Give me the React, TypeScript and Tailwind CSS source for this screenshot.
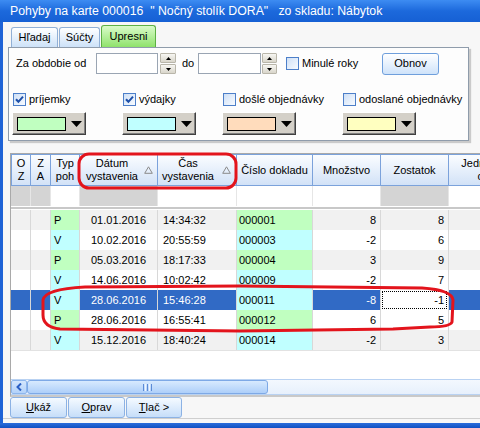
import React from "react";

type Row = { t: "P" | "V"; d: string; c: string; n: string; m: string; z: string; sel?: boolean };

const rows: Row[] = [
  { t: "P", d: "01.01.2016", c: "14:34:32", n: "000001", m: "8", z: "8" },
  { t: "V", d: "10.02.2016", c: "20:55:59", n: "000003", m: "-2", z: "6" },
  { t: "P", d: "05.03.2016", c: "18:17:33", n: "000004", m: "3", z: "9" },
  { t: "V", d: "14.06.2016", c: "10:02:42", n: "000009", m: "-2", z: "7" },
  { t: "V", d: "28.06.2016", c: "15:46:28", n: "000011", m: "-8", z: "-1", sel: true },
  { t: "P", d: "28.06.2016", c: "16:55:41", n: "000012", m: "6", z: "5" },
  { t: "V", d: "15.12.2016", c: "18:40:24", n: "000014", m: "-2", z: "3" },
];

function Check({ on }: { on?: boolean }) {
  return (
    <span className="w-[13px] h-[13px] shrink-0 border border-[#4d7fc9] bg-gradient-to-br from-[#cfe0f6] to-[#f8fbff] flex items-center justify-center">
      {on && (
        <svg width="9" height="9" viewBox="0 0 9 9">
          <path d="M1 4.2 L3.4 6.8 L8 1.6" stroke="#1d4fa8" strokeWidth="2" fill="none" />
        </svg>
      )}
    </span>
  );
}

function Spin({ w }: { w: string }) {
  const btn =
    "flex-1 bg-gradient-to-b from-[#f7f6f2] to-[#d9d6cb] border border-[#b9b6aa] rounded-[1px] flex items-center justify-center";
  return (
    <div className={`${w} h-[21px] flex flex-col gap-[1px]`}>
      <div className={btn}>
        <svg width="5" height="3" viewBox="0 0 5 3">
          <path d="M0 3 L2.5 0 L5 3 Z" fill="#000" />
        </svg>
      </div>
      <div className={btn}>
        <svg width="5" height="3" viewBox="0 0 5 3">
          <path d="M0 0 L2.5 3 L5 0 Z" fill="#000" />
        </svg>
      </div>
    </div>
  );
}

function Combo({ color }: { color: string }) {
  return (
    <div className="w-[74px] h-[23px] bg-[#d4d0c8] border border-t-white border-l-white border-r-[#404040] border-b-[#404040] shadow-[inset_-1px_-1px_0_#808080] flex items-center pl-[4px]">
      <div className="w-[49px] h-[14px] border border-black" style={{ background: color }} />
      <svg className="ml-[5px]" width="11" height="6" viewBox="0 0 11 6">
        <path d="M0 0 L11 0 L5.5 6 Z" fill="#000" />
      </svg>
    </div>
  );
}

function SortTri() {
  return (
    <svg width="9" height="8" viewBox="0 0 9 8">
      <path d="M4.5 0.8 L8.3 7.3 L0.7 7.3 Z" fill="none" stroke="#8a8a8a" strokeWidth="1" />
    </svg>
  );
}

const hdr =
  "h-[32px] shrink-0 border-r border-t border-b border-[#7ba2db] bg-gradient-to-b from-[#fbfdff] to-[#d2e2f7] flex items-center justify-center text-center leading-[13px]";

export default function App() {
  return (
    <div className="relative w-[480px] h-[428px] overflow-hidden flex flex-col bg-[#f7f7f7] text-[11px] text-black [font-family:'Liberation_Sans',Arial,sans-serif]">
      {/* title bar */}
      <div className="h-[22px] shrink-0 flex items-center pl-[10px] text-white text-[12.3px] whitespace-pre bg-gradient-to-b from-[#3d8cf2] via-[#1c69dc] to-[#1660d4]">
        {'Pohyby na karte 000016  " Nočný stolík DORA"   zo skladu: Nábytok'}
      </div>

      <div className="h-[401px] flex border-l-[3px] border-l-[#1f63d6]">
        <div className="flex-1 min-w-0 flex flex-col">
          {/* tabs */}
          <div className="h-[25px] pt-[3px] ml-[8px] flex items-end gap-[1px]">
            <div className="w-[47px] h-[20px] rounded-t-[3px] border border-b-0 border-[#91b0d6] bg-gradient-to-b from-white to-[#cde2f8] flex items-center justify-center">
              Hľadaj
            </div>
            <div className="w-[41px] h-[20px] rounded-t-[3px] border border-b-0 border-[#91b0d6] bg-gradient-to-b from-white to-[#cde2f8] flex items-center justify-center">
              Súčty
            </div>
            <div className="w-[55px] h-[22px] rounded-t-[3px] border border-b-0 border-[#5cb043] bg-gradient-to-b from-[#d9fbc8] to-[#8fe26a] flex items-center justify-center">
              Upresni
            </div>
          </div>

          {/* filter panel */}
          <div className="ml-[5px] w-[461px] h-[94px] border border-[#8f9cab] bg-[#fdfdfd] shadow-[2px_2px_1px_rgba(0,0,0,0.18)] flex flex-col pt-[5px]">
            <div className="h-[21px] flex items-center pl-[7px]">
              <span className="w-[80px]">Za obdobie od</span>
              <div className="w-[62px] h-[21px] bg-white border border-[#9aa5b3]" />
              <Spin w="ml-[2px] w-[16px]" />
              <span className="ml-[6px] w-[16px]">do</span>
              <div className="w-[63px] h-[21px] bg-white border border-[#9aa5b3]" />
              <Spin w="ml-[1px] w-[15px]" />
              <span className="ml-[9px]">
                <Check />
              </span>
              <span className="ml-[3px] w-[80px]">Minulé roky</span>
              <div className="w-[57px] h-[22px] rounded-[3px] border border-[#6f9fdc] bg-gradient-to-b from-white to-[#cfe3fa] flex items-center justify-center">
                Obnov
              </div>
            </div>

            <div className="mt-[19px] h-[13px] flex items-center pl-[3px]">
              <div className="w-[110px] flex items-center gap-[3px] pl-[1px]">
                <Check on />
                <span>príjemky</span>
              </div>
              <div className="w-[100px] flex items-center gap-[3px] pl-[1px]">
                <Check on />
                <span>výdajky</span>
              </div>
              <div className="w-[120px] flex items-center gap-[3px] pl-[1px]">
                <Check />
                <span>došlé objednávky</span>
              </div>
              <div className="flex items-center gap-[3px] pl-[1px]">
                <Check />
                <span>odoslané objednávky</span>
              </div>
            </div>

            <div className="mt-[6px] flex pl-[3px]">
              <div className="w-[110px]">
                <Combo color="#c0ffc0" />
              </div>
              <div className="w-[100px]">
                <Combo color="#c0ffff" />
              </div>
              <div className="w-[120px]">
                <Combo color="#ffdcbc" />
              </div>
              <Combo color="#ffffc0" />
            </div>
          </div>

          {/* grid */}
          <div className="ml-[7px] mt-[12px] h-[244px] border-t border-l border-[#a9a9a9] border-b-2 border-b-[#c9c9c9] bg-white flex flex-col overflow-hidden">
            <div className="flex">
              <div className={`${hdr} w-[20px] border-l`}>
                O<br />Z
              </div>
              <div className={`${hdr} w-[20px]`}>
                Z<br />A
              </div>
              <div className={`${hdr} w-[29px]`}>
                Typ<br />poh
              </div>
              <div className={`${hdr} w-[78px] justify-start`}>
                <span className="w-[64px] text-center">
                  Dátum<br />vystavenia
                </span>
                <SortTri />
              </div>
              <div className={`${hdr} w-[79px] justify-start`}>
                <span className="w-[60px] text-center">
                  Čas<br />vystavenia
                </span>
                <span className="ml-[4px] flex">
                  <SortTri />
                </span>
              </div>
              <div className={`${hdr} w-[76px]`}>Číslo dokladu</div>
              <div className={`${hdr} w-[68px]`}>Množstvo</div>
              <div className={`${hdr} w-[68px]`}>Zostatok</div>
              <div className={`${hdr} w-[82px]`}>
                Jednotková<br />cena
              </div>
            </div>

            <div className="flex h-[20px]">
              <div className="w-[20px] shrink-0 bg-[#d4d4d4] border-r border-[#e6e6e6]" />
              <div className="w-[20px] shrink-0 bg-[#d4d4d4] border-r border-[#e6e6e6]" />
              <div className="w-[29px] shrink-0 border-r border-[#e6e6e6]" />
              <div className="w-[78px] shrink-0 bg-[#d4d4d4] border-r border-[#e6e6e6]" />
              <div className="w-[79px] shrink-0 border-r border-[#e6e6e6]" />
              <div className="w-[76px] shrink-0 border-r border-[#e6e6e6]" />
              <div className="w-[68px] shrink-0 border-r border-[#e6e6e6]" />
              <div className="w-[68px] shrink-0 bg-[#d4d4d4] border-r border-[#e6e6e6]" />
              <div className="w-[82px] shrink-0" />
            </div>
            <div className="h-[4px] border-t border-white">
              <div className="h-[2px] bg-[#c8c8c8]" />
            </div>

            {rows.map((r, i) => {
              const bg = r.sel ? "bg-[#316ac5] text-white" : i % 2 === 0 ? "bg-[#f1f1f1]" : "bg-white";
              const typ = r.t === "P" ? "bg-[#c0ffc0]" : "bg-[#c0ffff]";
              const cell = "h-[20px] shrink-0 border-r border-[#d8d8d8] flex items-center";
              return (
                <div key={i} className="flex">
                  <div className={`${cell} w-[20px] ${bg}`} />
                  <div className={`${cell} w-[20px] ${bg}`} />
                  <div className={`${cell} w-[29px] pl-[3px] ${typ}`}>{r.t}</div>
                  <div className={`${cell} w-[78px] justify-center ${bg}`}>{r.d}</div>
                  <div className={`${cell} w-[79px] pl-[5px] ${bg}`}>{r.c}</div>
                  <div className={`${cell} w-[76px] pl-[2px] ${typ}`}>{r.n}</div>
                  <div className={`${cell} w-[68px] justify-end pr-[4px] ${bg}`}>{r.m}</div>
                  {r.sel ? (
                    <div className={`${cell} w-[68px] bg-white p-[1px]`}>
                      <div className="w-full h-full border border-dotted border-black flex items-center justify-end pr-[2px]">
                        {r.z}
                      </div>
                    </div>
                  ) : (
                    <div className={`${cell} w-[68px] justify-end pr-[4px] ${bg}`}>{r.z}</div>
                  )}
                  <div className={`${cell} w-[82px] ${bg}`} />
                </div>
              );
            })}

            <div className="h-[29px] border-t border-[#e2e2e2]" />

            {/* horizontal scrollbar */}
            <div className="h-[16px] flex border-y border-[#b9d2f2] bg-gradient-to-b from-[#f3f8fe] to-[#e7f0fc]">
              <div className="w-[16px] h-full rounded-[2px] border border-[#8db6ec] bg-gradient-to-b from-[#d3e6fd] to-[#b3d2f9] flex items-center justify-center">
                <svg width="6" height="8" viewBox="0 0 6 8">
                  <path d="M5 0.5 L1.5 4 L5 7.5" stroke="#2a5fc4" strokeWidth="2" fill="none" />
                </svg>
              </div>
              <div className="w-[241px] h-full rounded-[3px] border border-[#7ea9e6] bg-gradient-to-b from-[#d8eafe] to-[#aecff9] flex items-center justify-center gap-[1px]">
                <span className="w-[1px] h-[7px] bg-[#5c8bd6]" />
                <span className="w-[1px] h-[7px] bg-[#eef5ff]" />
                <span className="w-[1px] h-[7px] bg-[#5c8bd6]" />
                <span className="w-[1px] h-[7px] bg-[#eef5ff]" />
                <span className="w-[1px] h-[7px] bg-[#5c8bd6]" />
              </div>
            </div>
          </div>

          {/* buttons */}
          <div className="ml-[7px] h-[21px] flex gap-[1px]">
            <div className="w-[57px] h-[21px] rounded-[3px] border border-[#8cb2e4] bg-gradient-to-b from-[#f5faff] to-[#c6def9] flex items-center justify-center">
              <span>
                <u>U</u>káž
              </span>
            </div>
            <div className="w-[57px] h-[21px] rounded-[3px] border border-[#8cb2e4] bg-gradient-to-b from-[#f5faff] to-[#c6def9] flex items-center justify-center">
              <span>
                <u>O</u>prav
              </span>
            </div>
            <div className="w-[56px] h-[21px] rounded-[3px] border border-[#8cb2e4] bg-gradient-to-b from-[#f5faff] to-[#c6def9] flex items-center justify-center">
              <span>
                <u>T</u>lač &gt;
              </span>
            </div>
          </div>
          <div className="h-[1px] bg-[#cfcfcf]" />
        </div>
      </div>
      <div className="h-[5px] shrink-0 bg-gradient-to-b from-[#2a6ddb] to-[#0f50c2]" />

      {/* red marker annotations */}
      <svg className="absolute left-0 top-0 pointer-events-none" width="480" height="428" viewBox="0 0 480 428">
        <rect x="79" y="154" width="157" height="34" rx="10" fill="none" stroke="#e3141c" strokeWidth="3" />
        <path
          d="M85 287 L240 286 L422 288 Q452 290 453 300 L452 322 Q450 327 430 327 L393 329 L240 331 L60 329 Q43 327 43 315 L43 300 Q45 289 85 287 Z"
          fill="none"
          stroke="#e3141c"
          strokeWidth="3"
          strokeLinejoin="round"
        />
      </svg>
    </div>
  );
}
